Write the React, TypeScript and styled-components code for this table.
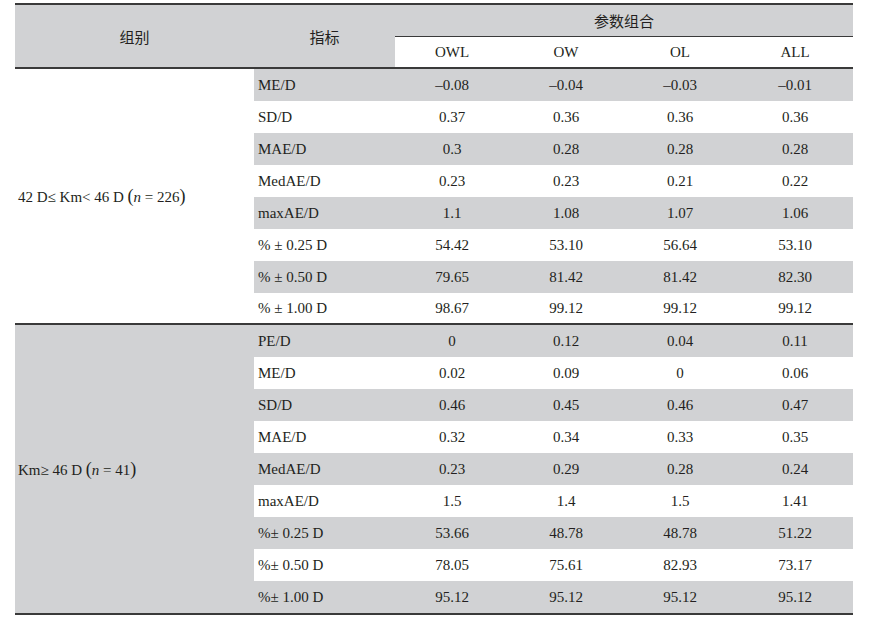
import styled, { createGlobalStyle } from "styled-components"

const GlobalStyle = createGlobalStyle`
    body {
        margin: 0;
        background: #ffffff;
    }
`

const gray = '#d1d2d4'
const ink = '#231f20'
const rule = '#3a3a3a'

type Row = { label: string, values: string[] }

const groupA: Row[] = [
    { label: 'ME/D', values: ['–0.08', '–0.04', '–0.03', '–0.01'] },
    { label: 'SD/D', values: ['0.37', '0.36', '0.36', '0.36'] },
    { label: 'MAE/D', values: ['0.3', '0.28', '0.28', '0.28'] },
    { label: 'MedAE/D', values: ['0.23', '0.23', '0.21', '0.22'] },
    { label: 'maxAE/D', values: ['1.1', '1.08', '1.07', '1.06'] },
    { label: '% ± 0.25 D', values: ['54.42', '53.10', '56.64', '53.10'] },
    { label: '% ± 0.50 D', values: ['79.65', '81.42', '81.42', '82.30'] },
    { label: '% ± 1.00 D', values: ['98.67', '99.12', '99.12', '99.12'] },
]

const groupB: Row[] = [
    { label: 'PE/D', values: ['0', '0.12', '0.04', '0.11'] },
    { label: 'ME/D', values: ['0.02', '0.09', '0', '0.06'] },
    { label: 'SD/D', values: ['0.46', '0.45', '0.46', '0.47'] },
    { label: 'MAE/D', values: ['0.32', '0.34', '0.33', '0.35'] },
    { label: 'MedAE/D', values: ['0.23', '0.29', '0.28', '0.24'] },
    { label: 'maxAE/D', values: ['1.5', '1.4', '1.5', '1.41'] },
    { label: '%± 0.25 D', values: ['53.66', '48.78', '48.78', '51.22'] },
    { label: '%± 0.50 D', values: ['78.05', '75.61', '82.93', '73.17'] },
    { label: '%± 1.00 D', values: ['95.12', '95.12', '95.12', '95.12'] },
]

export default function App() {
    return (
        <Page>
            <GlobalStyle />
            <Table>
                <colgroup>
                    <col style={{ width: 239 }} />
                    <col style={{ width: 141 }} />
                    <col style={{ width: 114 }} />
                    <col style={{ width: 114 }} />
                    <col style={{ width: 114 }} />
                    <col style={{ width: 116 }} />
                </colgroup>
                <thead>
                    <HeadRow>
                        <HeadCell rowSpan={2}>组别</HeadCell>
                        <HeadCell rowSpan={2}>指标</HeadCell>
                        <SpanCell colSpan={4}>参数组合</SpanCell>
                    </HeadRow>
                    <HeadRow>
                        <SubHead>OWL</SubHead>
                        <SubHead>OW</SubHead>
                        <SubHead>OL</SubHead>
                        <SubHead>ALL</SubHead>
                    </HeadRow>
                </thead>
                <tbody>
                    {groupA.map((row, i) => (
                        <DataRow key={'a' + i}>
                            {i === 0 && (
                                <GroupCell rowSpan={groupA.length} $shade={false}>
                                    42 D≤ Km&lt; 46 D <Paren>(</Paren><i>n</i> = 226<Paren>)</Paren>
                                </GroupCell>
                            )}
                            <LabelCell $shade={i % 2 === 0} $last={i === groupA.length - 1}>{row.label}</LabelCell>
                            {row.values.map((v, j) => (
                                <ValueCell key={j} $shade={i % 2 === 0} $last={i === groupA.length - 1}>{v}</ValueCell>
                            ))}
                        </DataRow>
                    ))}
                    {groupB.map((row, i) => (
                        <DataRow key={'b' + i}>
                            {i === 0 && (
                                <GroupCell rowSpan={groupB.length} $shade={true}>
                                    Km≥ 46 D <Paren>(</Paren><i>n</i> = 41<Paren>)</Paren>
                                </GroupCell>
                            )}
                            <LabelCell $shade={i % 2 === 0} $last={i === groupB.length - 1} $tall={i === groupB.length - 1}>{row.label}</LabelCell>
                            {row.values.map((v, j) => (
                                <ValueCell key={j} $shade={i % 2 === 0} $last={i === groupB.length - 1} $tall={i === groupB.length - 1}>{v}</ValueCell>
                            ))}
                        </DataRow>
                    ))}
                </tbody>
            </Table>
        </Page>
    )
}

const Page = styled.div`
    padding: 3px 0 0 15px;
    font-family: "Liberation Serif", "Noto Sans CJK SC", serif;
    color: ${ink};
    font-size: 15px;
`

const Table = styled.table`
    width: 838px;
    border-collapse: separate;
    border-spacing: 0;
    table-layout: fixed;
    border-top: 2px solid ${rule};
`

const HeadRow = styled.tr`
    height: 32px;
`

const HeadCell = styled.th`
    background: ${gray};
    font-weight: normal;
    font-family: "Noto Sans CJK SC", sans-serif;
    font-size: 15px;
    text-align: center;
    vertical-align: middle;
    padding: 0;
    border-bottom: 2px solid ${rule};
`

const SpanCell = styled.th`
    background: ${gray};
    font-weight: normal;
    font-family: "Noto Sans CJK SC", sans-serif;
    font-size: 15px;
    text-align: center;
    padding: 0;
    height: 31px;
    border-bottom: 1px solid ${rule};
`

const SubHead = styled.th`
    background: #ffffff;
    font-weight: normal;
    text-align: center;
    padding: 0;
    height: 30px;
    border-bottom: 2px solid ${rule};
`

const DataRow = styled.tr`
    height: 32px;
`

const GroupCell = styled.td<{ $shade: boolean }>`
    background: ${p => p.$shade ? gray : '#ffffff'};
    text-align: left;
    vertical-align: middle;
    padding: 0 0 0 3px;
    border-bottom: 2px solid ${rule};
    i {
        font-style: italic;
    }
`

const Paren = styled.span`
    font-size: 18px;
    line-height: 1;
`

const LabelCell = styled.td<{ $shade: boolean, $last: boolean, $tall?: boolean }>`
    background: ${p => p.$shade ? gray : '#ffffff'};
    text-align: left;
    padding: 0 0 0 4px;
    height: ${p => p.$tall ? '32px' : p.$last ? '30px' : '32px'};
    border-bottom: ${p => p.$last ? `2px solid ${rule}` : 'none'};
`

const ValueCell = styled.td<{ $shade: boolean, $last: boolean, $tall?: boolean }>`
    background: ${p => p.$shade ? gray : '#ffffff'};
    text-align: center;
    padding: 0;
    height: ${p => p.$tall ? '32px' : p.$last ? '30px' : '32px'};
    border-bottom: ${p => p.$last ? `2px solid ${rule}` : 'none'};
`
